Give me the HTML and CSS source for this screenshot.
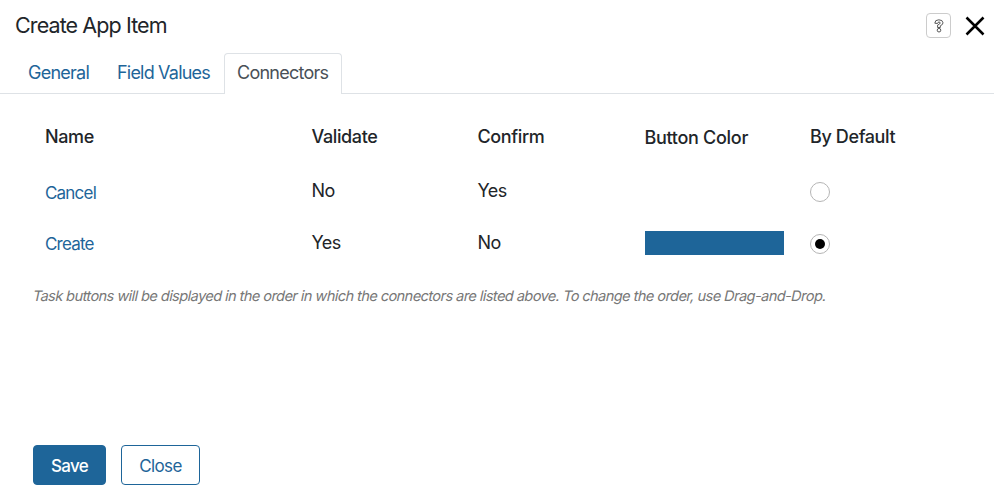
FILE: index.html
```html
<!DOCTYPE html>
<html lang="en">
<head>
<meta charset="utf-8">
<title>Create App Item</title>
<link rel="stylesheet" href="styles.css">
</head>
<body>
<header class="header">
  <h1 class="title">Create App Item</h1>
  <button class="help" aria-label="Help"><svg width="10" height="14" viewBox="0 0 10 14"><path d="M.8 4.2Q.8 .8 4.8 .8T9 3.8Q9 5.7 6.3 6.8V8.5H3.6V6.1Q6.2 5 6.2 4Q6.2 3 5 3T3.5 4.5Z"/><circle cx="5" cy="11.2" r="1.8"/></svg></button>
  <button class="dismiss" aria-label="Dismiss"><svg width="20" height="20" viewBox="0 0 20 20"><path d="M1.5 1.5l17 17M18.5 1.5l-17 17"/></svg></button>
</header>
<nav class="tabs">
  <a class="tab general"><span>General</span></a>
  <a class="tab fields"><span>Field Values</span></a>
  <a class="tab active"><span>Connectors</span></a>
</nav>
<main>
  <div class="row head"><span>Name</span><span>Validate</span><span>Confirm</span><span class="low">Button Color</span><span>By Default</span></div>
  <div class="row first"><a>Cancel</a><span>No</span><span>Yes</span><span></span><i class="radio"></i></div>
  <div class="row second"><a>Create</a><span>Yes</span><span>No</span><span class="swatch"></span><i class="radio checked"></i></div>
  <p class="note">Task buttons will be displayed in the order in which the connectors are listed above. To change the order, use Drag-and-Drop.</p>
</main>
<footer class="footer"><button class="save">Save</button><button class="close">Close</button></footer>
</body>
</html>
```
FILE: styles.css
```css
* { box-sizing: border-box; }
body { margin: 0; height: 497px; overflow: hidden; background: #fff; color: #212529; font: 18px/26px Inter, sans-serif; letter-spacing: -.38px; display: flex; flex-direction: column; }
button { font: inherit; letter-spacing: inherit; padding: 0; background: none; border: 0; }
.header { height: 53px; display: flex; align-items: center; padding: 0 9px 1px 15px; }
.title { margin: 0 0 2px; flex: 1; font-size: 21.5px; font-weight: 400; letter-spacing: -.9px; }
.help { width: 25px; height: 25px; border: 1px solid #ccc; border-radius: 4px; display: flex; align-items: center; justify-content: center; margin: 0 14px 1px 0; }
.help path, .help circle { fill: #fff; stroke: #444; stroke-width: .9; }
.dismiss { width: 20px; height: 20px; display: flex; }
.dismiss path { stroke: #000; stroke-width: 2.5; fill: none; }
.tabs { height: 41px; border-bottom: 1px solid #dee2e6; display: flex; padding-left: 28px; letter-spacing: -.75px; }
.tab { height: 41px; padding-top: 7px; color: #1e6599; white-space: nowrap; }
.general { width: 89px; }
.fields { width: 107px; letter-spacing: -.8px; }
.active { width: 118px; padding: 6px 0 0 12px; color: #495057; background: #fff; border: 1px solid #dee2e6; border-bottom: 0; border-radius: 4px 4px 0 0; }
main { flex: 1; padding: 29px 33px 0; }
.row { display: grid; grid-template-columns: 266.5px 166px 167px 165.5px 100px; padding-left: 12px; align-items: center; }
.row:not(.head) { letter-spacing: -.55px; }
.row a { color: #1e6599; font-size: 17px; letter-spacing: -.8px; padding-top: 3px; }
.head { font-weight: 500; height: 26px; }
.low { padding-top: 2px; letter-spacing: -.3px; }
.first { margin-top: 28px; }
.first span { margin-top: -1px; }
.second { margin-top: 23px; height: 28px; }
.second a { padding-top: 2px; }
.second span:not(.swatch) { margin-top: -1px; }
.swatch { width: 139px; height: 24px; background: #1e6599; margin-top: -1px; }
.radio { width: 20px; height: 20px; border: 1px solid #b5b5b5; border-radius: 50%; display: flex; align-items: center; justify-content: center; }
.second .radio { margin-top: 2px; }
.checked::after { content: ""; width: 10px; height: 10px; border-radius: 50%; background: #000; }
.note { margin: 26px 0 0; width: max-content; font-size: 14.5px; letter-spacing: -.54px; color: #777; white-space: nowrap; transform: skewX(-12deg); }
.footer { height: 52px; padding-left: 33px; display: flex; gap: 15px; }
.footer button { height: 40px; border: 1px solid #1e6599; border-radius: 4px; font-size: 17px; padding-top: 2px; letter-spacing: -.7px; }
.footer .save { width: 73px; background: #1e6599; color: #fff; font-weight: 500; }
.footer .close { width: 79px; color: #1e6599; letter-spacing: -.6px; }
```
